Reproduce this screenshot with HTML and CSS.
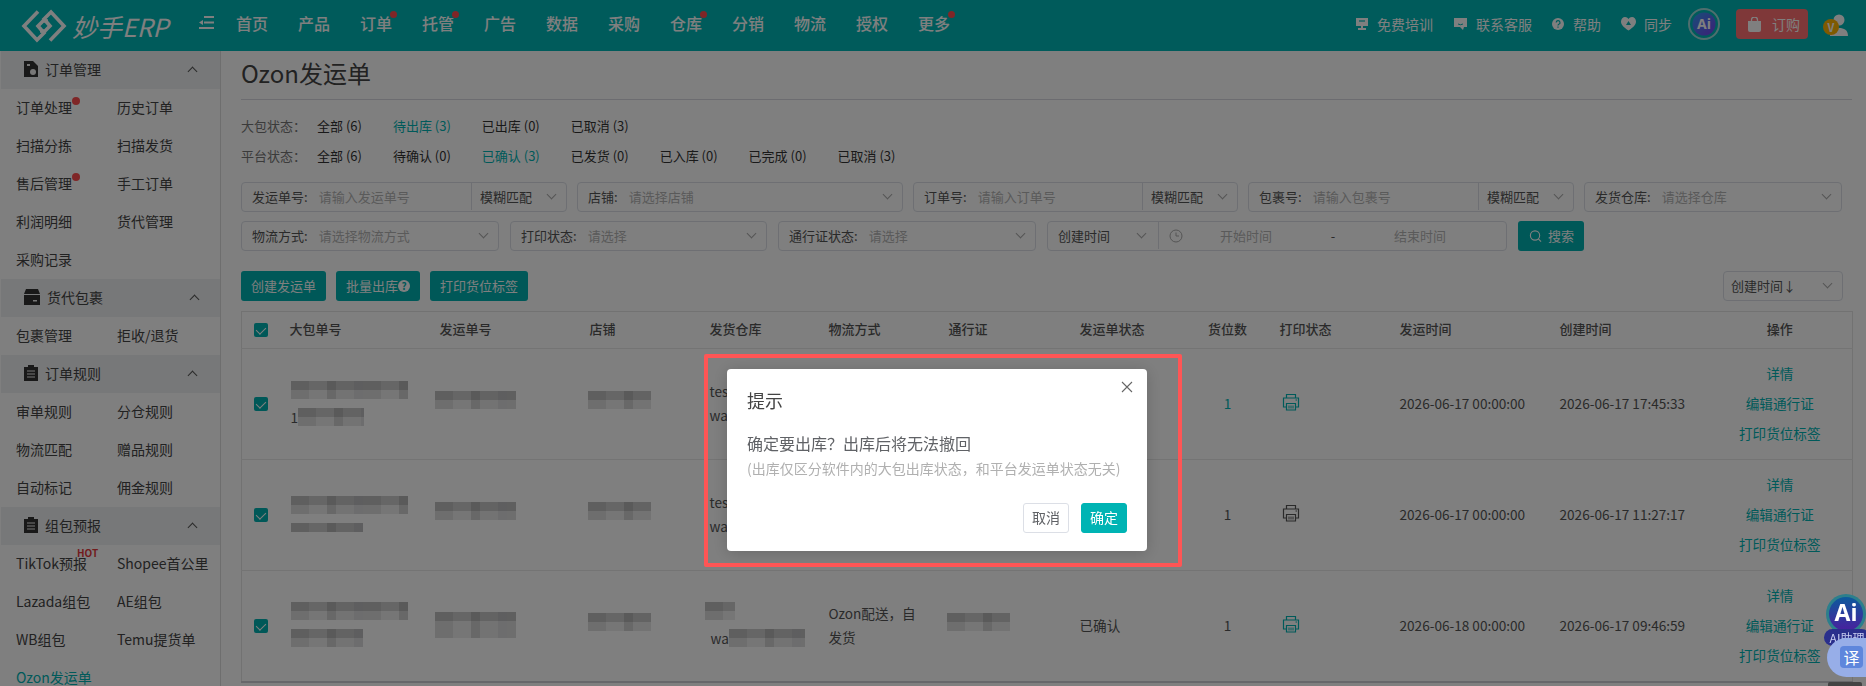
FILE: index.html
```html
<!DOCTYPE html>
<html lang="zh-CN">
<head>
<meta charset="utf-8">
<title>Ozon发运单</title>
<link rel="stylesheet" href="styles.css">
</head>
<body>
<div class="app">
  <header class="topbar">
    <div class="brand">
      <svg class="logo" viewBox="0 0 46 34" width="46" height="34"><g fill="none" stroke="#fff" stroke-width="3.6"><path d="M17 2.5 3 17l13 14 7-7-6-7 5-5h5"/><path d="M29 31.500 43 17 30 3l-7 7 6 7-5 5h-5"/></g></svg>
      <span class="brand-name">妙手ERP</span>
    </div>
    <svg class="collapse" viewBox="0 0 15 13" width="15" height="13"><path d="M5 1h10M5 6.500h10M0 12h15" stroke="#fff" stroke-width="2.200" fill="none"/><path d="M4 4v5L0 6.500z" fill="#fff"/></svg>
    <nav class="nav">
      <a class="nav-item">首页</a><a class="nav-item">产品</a><a class="nav-item dot">订单</a><a class="nav-item dot">托管</a><a class="nav-item">广告</a><a class="nav-item">数据</a><a class="nav-item">采购</a><a class="nav-item dot">仓库</a><a class="nav-item">分销</a><a class="nav-item">物流</a><a class="nav-item">授权</a><a class="nav-item dot">更多</a>
    </nav>
    <div class="tools">
      <span class="tool"><svg viewBox="0 0 14 14" width="14" height="14"><path d="M1 1h12v8H8v2h3v2H3v-2h3V9H1z" fill="#fff"/><path d="M4 4h6" stroke="#00b7b7" stroke-width="1.200"/></svg>免费培训</span>
      <span class="tool"><svg viewBox="0 0 15 14" width="15" height="14"><path d="M1 1h13v9h-3l-1 3-3-3H1z" fill="#fff"/><path d="M5 7q2.500 1.500 5 0" stroke="#00b7b7" fill="none"/></svg>联系客服</span>
      <span class="tool tool-help"><svg viewBox="0 0 12 12" width="12" height="12"><circle cx="6" cy="6" r="6" fill="#fff"/><path d="M4.200 4.600a1.900 1.900 0 1 1 2.600 1.700c-.6.300-.8.600-.8 1.200M6 8.600v1.200" fill="none" stroke="#00b7b7" stroke-width="1.200"/></svg>帮助</span>
      <span class="tool tool-sync"><svg viewBox="0 0 15 14" width="15" height="14"><path d="M7.500 13.500C3 10.500 0 8 0 4.500 0 2 2 0 4 0c1.500 0 2.700.7 3.500 2C8.300.7 9.500 0 11 0c2 0 4 2 4 4.500 0 3.500-3 6-7.500 9z" fill="#fff"/><path d="M7.500 4 5 8h5z" fill="#00b7b7"/></svg>同步</span>
      <svg class="ai-top" viewBox="0 0 32 32" width="32" height="32"><defs><linearGradient id="aig" x1="0" y1="0" x2="1" y2="1"><stop offset="0" stop-color="#2f9bf0"/><stop offset="1" stop-color="#7a3ff0"/></linearGradient></defs><circle cx="16" cy="16" r="15" fill="none" stroke="#9fdcdc" stroke-width="2"/><circle cx="16" cy="16" r="11.500" fill="url(#aig)"/><text x="16" y="21" class="ai-mark">Ai</text></svg>
      <a class="buy"><svg viewBox="0 0 13 15" width="13" height="15"><path d="M0 4h13v9a2 2 0 0 1-2 2H2a2 2 0 0 1-2-2z" fill="#fff"/><path d="M3.500 6V3a3 3 0 0 1 6 0v3" fill="none" stroke="#fff" stroke-width="1.300"/></svg>订购</a>
      <span class="user">
        <svg viewBox="0 0 22 22" width="22" height="22"><circle cx="11" cy="6" r="5.500" fill="#fff"/><path d="M2 22c0-6 4-8 9-8s9 2 9 8z" fill="#fff"/></svg>
        <i class="vip">V</i>
      </span>
    </div>
  </header>

  <div class="body">
    <aside class="side">
      <section>
        <h3 class="side-head"><svg viewBox="0 0 14 16" width="14" height="16"><path d="M0 0h9l5 5v11H0z" fill="#333"/><circle cx="9" cy="11" r="3" fill="#eee"/><path d="M3 3h3v2H3z" fill="#eee"/></svg><span>订单管理</span><i class="chev"></i></h3>
        <div class="side-grid">
          <a class="side-link dotted">订单处理</a><a class="side-link">历史订单</a>
          <a class="side-link">扫描分拣</a><a class="side-link">扫描发货</a>
          <a class="side-link dotted">售后管理</a><a class="side-link">手工订单</a>
          <a class="side-link">利润明细</a><a class="side-link">货代管理</a>
          <a class="side-link">采购记录</a>
        </div>
      </section>
      <section>
        <h3 class="side-head"><svg viewBox="0 0 16 16" width="16" height="16"><path d="M2 0h12l2 5H0z" fill="#333"/><path d="M0 6h16v10H0z" fill="#333"/><path d="M9 11h4v1.500H9z" fill="#eee"/></svg><span>货代包裹</span><i class="chev"></i></h3>
        <div class="side-grid">
          <a class="side-link">包裹管理</a><a class="side-link">拒收/退货</a>
        </div>
      </section>
      <section>
        <h3 class="side-head"><svg viewBox="0 0 14 16" width="14" height="16"><path d="M0 2h4V0h6v2h4v14H0z" fill="#333"/><path d="M3 6h8M3 9h8M3 12h8" stroke="#eee" stroke-width="1.200"/></svg><span>订单规则</span><i class="chev"></i></h3>
        <div class="side-grid">
          <a class="side-link">审单规则</a><a class="side-link">分仓规则</a>
          <a class="side-link">物流匹配</a><a class="side-link">赠品规则</a>
          <a class="side-link">自动标记</a><a class="side-link">佣金规则</a>
        </div>
      </section>
      <section>
        <h3 class="side-head"><svg viewBox="0 0 14 16" width="14" height="16"><path d="M0 2h4V0h6v2h4v14H0z" fill="#333"/><path d="M3 6h8M3 9h8M3 12h8" stroke="#eee" stroke-width="1.200"/></svg><span>组包预报</span><i class="chev"></i></h3>
        <div class="side-grid">
          <a class="side-link hot">TikTok预报<b>HOT</b></a><a class="side-link">Shopee首公里</a>
          <a class="side-link">Lazada组包</a><a class="side-link">AE组包</a>
          <a class="side-link">WB组包</a><a class="side-link">Temu提货单</a>
          <a class="side-link current">Ozon发运单</a>
        </div>
      </section>
    </aside>

    <main class="main">
      <h1 class="title">Ozon发运单</h1>

      <div class="status-block">
        <div class="status-row"><span class="status-label">大包状态：</span><a class="status">全部 (6)</a><a class="status on">待出库 (3)</a><a class="status">已出库 (0)</a><a class="status">已取消 (3)</a></div>
        <div class="status-row"><span class="status-label">平台状态：</span><a class="status">全部 (6)</a><a class="status">待确认 (0)</a><a class="status on">已确认 (3)</a><a class="status">已发货 (0)</a><a class="status">已入库 (0)</a><a class="status">已完成 (0)</a><a class="status">已取消 (3)</a></div>
      </div>

      <div class="filters">
        <div class="field w326"><span class="f-label">发运单号:</span><span class="f-ph">请输入发运单号</span><span class="f-sel"><span>模糊匹配</span><i class="down"></i></span></div>
        <div class="field w326"><span class="f-label">店铺:</span><span class="f-ph">请选择店铺</span><i class="down"></i></div>
        <div class="field w325"><span class="f-label">订单号:</span><span class="f-ph">请输入订单号</span><span class="f-sel"><span>模糊匹配</span><i class="down"></i></span></div>
        <div class="field w326"><span class="f-label">包裹号:</span><span class="f-ph">请输入包裹号</span><span class="f-sel"><span>模糊匹配</span><i class="down"></i></span></div>
        <div class="field w258"><span class="f-label">发货仓库:</span><span class="f-ph">请选择仓库</span><i class="down"></i></div>
      </div>
      <div class="filters second">
        <div class="field w258"><span class="f-label">物流方式:</span><span class="f-ph">请选择物流方式</span><i class="down"></i></div>
        <div class="field w257"><span class="f-label">打印状态:</span><span class="f-ph">请选择</span><i class="down"></i></div>
        <div class="field w258"><span class="f-label">通行证状态:</span><span class="f-ph">请选择</span><i class="down"></i></div>
        <div class="field w460">
          <span class="t-sel"><span>创建时间</span><i class="down"></i></span>
          <svg class="clock" viewBox="0 0 14 14" width="14" height="14"><circle cx="7" cy="7" r="6" fill="none" stroke="#aaa"/><path d="M7 3.500V7h3" fill="none" stroke="#aaa"/></svg>
          <span class="t-val">开始时间</span><span class="t-dash">-</span><span class="t-val">结束时间</span>
        </div>
        <a class="btn search"><svg viewBox="0 0 14 14" width="14" height="14"><circle cx="6.500" cy="6.500" r="5" fill="none" stroke="#fff" stroke-width="1.200"/><path d="m10 10 3 3" stroke="#fff" stroke-width="1.200"/></svg>搜索</a>
      </div>

      <div class="actions">
        <div class="action-btns">
          <a class="btn">创建发运单</a>
          <a class="btn">批量出库<i class="q">?</i></a>
          <a class="btn">打印货位标签</a>
        </div>
        <div class="field sort"><span class="f-label">创建时间↓</span><i class="down"></i></div>
      </div>

      <table class="grid">
        <colgroup>
          <col class="c36"><col class="c150"><col class="c150"><col class="c120"><col class="c119"><col class="c120"><col class="c131"><col class="c128"><col class="c72"><col class="c120"><col class="c160"><col class="c160"><col class="c145">
        </colgroup>
        <thead>
          <tr><th><i class="check"></i></th><th>大包单号</th><th>发运单号</th><th>店铺</th><th>发货仓库</th><th>物流方式</th><th>通行证</th><th>发运单状态</th><th class="ctr qty">货位数</th><th>打印状态</th><th>发运时间</th><th>创建时间</th><th class="ctr">操作</th></tr>
        </thead>
        <tbody>
          <tr>
            <td><i class="check"></i></td>
            <td><div class="mos m117"></div><div class="id-line"><span>1</span><div class="mos m66"></div></div></td>
            <td><div class="mos m81 inset"></div></td>
            <td><div class="mos m63 inset"></div></td>
            <td><p class="ln">test</p><p class="ln">warehouse</p></td>
            <td><p class="ln">Ozon配送，自</p><p class="ln">发货</p></td>
            <td><div class="mos m63 tiny"></div></td>
            <td>已确认</td>
            <td class="ctr qty on-text">1</td>
            <td><svg class="printer teal" viewBox="0 0 18 18" width="18" height="18"><use href="#print"/></svg></td>
            <td>2026-06-17 00:00:00</td>
            <td>2026-06-17 17:45:33</td>
            <td class="ctr ops"><a>详情</a><a>编辑通行证</a><a>打印货位标签</a></td>
          </tr>
          <tr>
            <td><i class="check"></i></td>
            <td><div class="mos m117"></div><div class="id-line"><div class="mos m72 slim"></div></div></td>
            <td><div class="mos m81 inset"></div></td>
            <td><div class="mos m63 inset"></div></td>
            <td><p class="ln">test</p><p class="ln">warehouse</p></td>
            <td><p class="ln">Ozon配送，自</p><p class="ln">发货</p></td>
            <td><div class="mos m63 tiny"></div></td>
            <td>已确认</td>
            <td class="ctr qty">1</td>
            <td><svg class="printer" viewBox="0 0 18 18" width="18" height="18"><use href="#print"/></svg></td>
            <td>2026-06-17 00:00:00</td>
            <td>2026-06-17 11:27:17</td>
            <td class="ctr ops"><a>详情</a><a>编辑通行证</a><a>打印货位标签</a></td>
          </tr>
          <tr>
            <td><i class="check"></i></td>
            <td><div class="mos m117"></div><div class="id-line"><div class="mos m72"></div></div></td>
            <td><div class="mos m81 tall"></div></td>
            <td><div class="mos m63 inset"></div></td>
            <td class="wh"><div class="mos m30"></div><div class="id-line"><span class="ln">wa</span><div class="mos m76"></div></div></td>
            <td><p class="ln">Ozon配送，自</p><p class="ln">发货</p></td>
            <td><div class="mos m63 inset"></div></td>
            <td>已确认</td>
            <td class="ctr qty">1</td>
            <td><svg class="printer teal" viewBox="0 0 18 18" width="18" height="18"><use href="#print"/></svg></td>
            <td>2026-06-18 00:00:00</td>
            <td>2026-06-17 09:46:59</td>
            <td class="ctr ops"><a>详情</a><a>编辑通行证</a><a>打印货位标签</a></td>
          </tr>
        </tbody>
      </table>
    </main>
  </div>

  <svg class="sprite" width="0" height="0"><symbol id="print" viewBox="0 0 18 18"><path d="M4.500 5V1.500h9V5M4.500 14H1.500V5h15v9h-3M4.500 10.500h9v6.500h-9z" fill="none" stroke="currentColor" stroke-width="1.200"/><path d="M13.500 7h1.500M7 12.500v3M9 12.500v3M11 12.500v3" stroke="currentColor"/></symbol></svg>
</div>

<div class="mask"></div>
<div class="scroll-thumb"></div>

<div class="dialog">
  <button class="close" aria-label="关闭"><svg viewBox="0 0 12 12" width="12" height="12"><path d="m1 1 10 10M11 1 1 11" stroke="#666" stroke-width="1.100" fill="none"/></svg></button>
  <h2 class="d-title">提示</h2>
  <p class="d-msg">确定要出库？出库后将无法撤回</p>
  <p class="d-sub">(出库仅区分软件内的大包出库状态，和平台发运单状态无关)</p>
  <div class="d-foot"><a class="d-btn">取消</a><a class="d-btn primary">确定</a></div>
</div>
<div class="red-box"></div>

<div class="float-ai">
  <svg viewBox="0 0 40 40" width="40" height="40"><defs><linearGradient id="aib" x1="0" y1="0" x2="0" y2="1"><stop offset="0" stop-color="#0c5a9c"/><stop offset="1" stop-color="#4a1f9e"/></linearGradient></defs><circle cx="20" cy="20" r="20" fill="#2c7f8c"/><circle cx="20" cy="20" r="17" fill="url(#aib)"/><text x="20" y="27" class="ai-mark big">Ai</text></svg>
  <span class="ai-tag">AI助理</span>
</div>
<div class="float-tr"><span>译</span></div>
</body>
</html>
```

FILE: styles.css
```css
* { box-sizing: border-box; }
html, body { margin: 0; height: 100%; }
body {
  font-family: "Noto Sans CJK SC", "Noto Sans", sans-serif;
  font-size: 13px;
  color: #555;
  background: #fff;
  overflow: hidden;
}
a { color: inherit; text-decoration: none; }
i { font-style: normal; }
h1, h2, h3, p { margin: 0; font-weight: 400; }
.app { height: 686px; display: flex; flex-direction: column; overflow: hidden; }
.sprite { position: absolute; }

/* top bar */
.topbar { height: 51px; flex: none; background: #00b7b7; display: flex; align-items: center; color: #fff; }
.brand { display: flex; align-items: center; margin-left: 21px; width: 178px; }
.logo { flex: none; }
.brand-name { font-size: 25px; font-style: italic; line-height: 34px; margin-left: 5px; }
.collapse { flex: none; margin-top: -6px; }
.nav { display: flex; margin-left: 22px; }
.nav-item { width: 32px; margin-right: 30px; font-size: 16px; font-weight: 500; line-height: 24px; position: relative; margin-top: -6px; }
.nav-item.dot::after { content: ""; position: absolute; right: -5px; top: 0; width: 7px; height: 7px; border-radius: 50%; background: #ff4d4f; }
.tools { margin-left: auto; display: flex; align-items: center; padding-right: 16px; margin-top: -3px; }
.tool { display: flex; align-items: center; gap: 8px; font-size: 14px; line-height: 20px; margin-right: 20px; }
.tool-help { gap: 9px; }
.tool-sync { margin-right: 16px; }
.ai-top { flex: none; margin-right: 16px; }
.ai-mark { font-family: "Open Sans", sans-serif; font-size: 14px; font-weight: 700; fill: #fff; text-anchor: middle; }
.ai-mark.big { font-size: 23px; }
.buy { width: 72px; height: 30px; background: #fe7072; border-radius: 4px; display: flex; align-items: center; gap: 11px; padding-left: 12px; font-size: 14px; margin-right: 15px; }
.user { width: 27px; height: 22px; position: relative; display: flex; justify-content: flex-end; margin-top: 2px; }
.vip { position: absolute; left: 0; top: 5px; width: 16px; height: 16px; border-radius: 50%; background: #ffb400; font-size: 11px; font-weight: 700; line-height: 16px; text-align: center; color: #fff; }

/* sidebar */
.body { flex: 1; min-height: 0; display: flex; }
.side { width: 221px; flex: none; padding-left: 1px; border-right: 1px solid #dcdcdc; }
.side-head { height: 38px; padding-bottom: 2px; background: #eef0f2; display: flex; align-items: center; padding-left: 23px; font-size: 14px; color: #444; }
.side-head svg { flex: none; margin-right: 7px; }
.side-head span { width: 144px; }
.chev { width: 7px; height: 7px; border-left: 1px solid #555; border-top: 1px solid #555; transform: rotate(45deg); margin-top: 5px; }
.side-grid { display: grid; grid-template-columns: 101px 1fr; padding-left: 15px; }
.side-link { height: 38px; line-height: 36px; font-size: 14px; color: #444; white-space: nowrap; position: relative; justify-self: start; }
.side-link.dotted::after { content: ""; position: absolute; right: -8px; top: 8px; width: 8px; height: 8px; border-radius: 50%; background: #ff4d4f; }
.side-link b { position: absolute; left: 61px; top: 2px; font-size: 10px; line-height: 12px; color: #e5393b; font-weight: 700; }
.side-link.current { color: #00b4b4; }

/* main */
.main { flex: 1; min-width: 0; padding: 0 14px 0 20px; }
.title { height: 49px; font-size: 24px; line-height: 44px; color: #444; border-bottom: 1px solid #d8d8e0; white-space: nowrap; }
.status-block { margin-top: 12px; }
.status-row { height: 30px; line-height: 28px; display: flex; font-size: 13px; color: #333; }
.status-label { width: 76px; color: #777; }
.status { margin-right: 31px; white-space: nowrap; }
.status.on { color: #00b4b4; }
.filters { display: flex; gap: 10px; margin-top: 10px; }
.filters.second { margin-top: 9px; gap: 11px; }
.field { height: 30px; padding-bottom: 1px; border: 1px solid #dcdfe6; border-radius: 4px; display: flex; align-items: center; padding-left: 10px; position: relative; white-space: nowrap; }
.w326 { width: 326px; } .w325 { width: 325px; } .w258 { width: 258px; } .w257 { width: 257px; } .w460 { width: 460px; padding-left: 0; }
.f-label { color: #555; margin-right: 11px; }
.f-ph { color: #b4b4b4; flex: 1; }
.down { flex: none; width: 7px; height: 7px; border-right: 1px solid #aaa; border-bottom: 1px solid #aaa; transform: rotate(45deg); margin: -4px 11px 0 0; }
.f-sel { width: 95px; height: 100%; flex: none; border-left: 1px solid #dcdfe6; display: flex; align-items: center; justify-content: space-between; padding-left: 8px; color: #555; }
.t-sel { width: 111px; height: 100%; flex: none; border-right: 1px solid #dcdfe6; display: flex; align-items: center; justify-content: space-between; padding-left: 10px; color: #555; }
.t-sel .down { margin-right: 13px; }
.clock { flex: none; margin: 0 2px 0 10px; }
.t-val { width: 122px; text-align: center; color: #b4b4b4; }
.t-dash { width: 52px; text-align: center; color: #555; }
.btn { height: 30px; padding: 0 10px 1px; background: #00b0b0; border-radius: 3px; color: #fff; font-size: 13px; display: flex; align-items: center; white-space: nowrap; }
.search { width: 66px; gap: 6px; padding-left: 11px; }
.q { width: 12px; height: 12px; border-radius: 50%; background: #fff; color: #00b0b0; font-size: 10px; line-height: 12px; font-weight: 700; text-align: center; }
.actions { display: flex; justify-content: space-between; margin-top: 20px; }
.action-btns { display: flex; gap: 10px; }
.sort { width: 120px; margin-right: 9px; padding-left: 7px; justify-content: space-between; }

/* table */
.grid { width: 1611px; margin-top: 10px; table-layout: fixed; border-collapse: collapse; border: 1px solid #e4e4e4; border-bottom: 2px solid #cfcfd4; }
.c36 { width: 36px; } .c150 { width: 150px; } .c120 { width: 120px; } .c119 { width: 119px; } .c131 { width: 131px; } .c128 { width: 128px; } .c72 { width: 72px; } .c160 { width: 160px; } .c145 { width: 145px; }
.grid th { height: 37px; padding: 0 0 3px 12px; text-align: left; font-weight: 500; font-size: 13px; color: #555; border-bottom: 1px solid #e8e8e8; }
.grid td { height: 111px; padding: 0 0 2px 12px; font-size: 13.600px; color: #555; border-bottom: 1px solid #e8e8e8; vertical-align: middle; }
.grid th:first-child, .grid td:first-child { padding-bottom: 0; }
.grid th.ctr, .grid td.ctr { text-align: center; padding-left: 0; }
.grid th.qty, .grid td.qty { padding-right: 8px; }
.on-text { color: #00b4b4 !important; }
.check { display: block; width: 14px; height: 14px; border-radius: 2px; background: #00b0b0; position: relative; }
.check::after { content: ""; position: absolute; left: 4px; top: 2px; width: 5px; height: 8px; border-right: 1.200px solid #fff; border-bottom: 1.200px solid #fff; transform: rotate(45deg); }
.ln { line-height: 24px; }
.printer { display: block; margin: -2px 0 0 2px; color: #555; }
.printer.teal { color: #00b4b4; }
.ops a { display: block; line-height: 30px; color: #00b4b4; }
.mos {
  height: 18px;
  background-color: #e4e4e4;
  background-image:
    repeating-linear-gradient(90deg, rgba(0,0,0,.07) 0 18px, rgba(0,0,0,0) 18px 36px, rgba(0,0,0,.12) 36px 45px, rgba(0,0,0,.03) 45px 63px, rgba(0,0,30,.08) 63px 72px),
    linear-gradient(180deg, rgba(0,0,0,.1) 0 9px, rgba(255,255,255,.35) 9px 18px);
}
.m117 { width: 117px; margin-left: 1px; }
.m81 { width: 81px; }
.m72 { width: 72px; margin-left: 1px; }
.m66 { width: 66px; }
.m63 { width: 63px; }
.m30 { width: 30px; margin-left: -5px; }
.m76 { width: 76px; }
.inset { margin-left: -3px; margin-top: -6px; }
.tiny { margin-left: 4px; }
.tall { height: 26px; margin-left: -5px; }
.slim { height: 9px; }
.m81.inset, .m81.tall { margin-left: -5px; }
.m63.inset { margin-left: -2px; }
.id-line { display: flex; align-items: center; margin-top: 9px; }
.id-line > span { line-height: 18px; margin-left: 1px; }
.wh .id-line { margin-top: 9px; }

/* overlay */
.mask { position: fixed; inset: 0; background: rgba(0,0,0,.5); }
.scroll-thumb { position: fixed; left: 1828px; top: 682px; width: 34px; height: 4px; border-radius: 2px 2px 0 0; background: #444; }
.dialog { position: fixed; left: 727px; top: 369px; width: 420px; height: 182px; background: #fff; border-radius: 4px; box-shadow: 0 2px 16px rgba(0,0,0,.18); padding: 19px 20px 20px; }
.close { position: absolute; right: 14px; top: 12px; width: 12px; height: 12px; padding: 0; border: 0; background: none; display: block; }
.close svg { display: block; }
.d-title { font-size: 18px; line-height: 24px; color: #444; }
.d-msg { margin-top: 19px; font-size: 16px; line-height: 24px; color: #606266; }
.d-sub { margin-top: 2px; font-size: 14px; line-height: 22px; color: #b0b0b0; white-space: nowrap; }
.d-foot { display: flex; justify-content: flex-end; gap: 12px; margin-top: 24px; }
.d-btn { width: 46px; height: 30px; border: 1px solid #dcdfe6; border-radius: 3px; font-size: 14px; line-height: 27px; text-align: center; color: #606266; background: #fff; }
.d-btn.primary { background: #00b4b4; border-color: #00b4b4; color: #fff; }
.red-box { position: fixed; left: 704px; top: 354px; width: 478px; height: 213px; border: 4px solid #f55; border-radius: 2px; }
.float-ai { position: fixed; left: 1826px; top: 594px; width: 40px; }
.float-ai svg { display: block; }
.ai-tag { position: absolute; left: -2px; top: 35px; width: 46px; height: 17px; border-radius: 9px; background: #2a2f8c; color: #c8cdf0; font-size: 12px; line-height: 17px; text-align: center; white-space: nowrap; }
.float-tr { position: fixed; left: 1827px; top: 638px; width: 39px; height: 39px; border-radius: 20px 0 0 20px; background: #97aee8; padding: 8px 0 0 13px; }
.float-tr span { display: block; width: 23px; height: 22px; border-radius: 4px; background: #5e86dc; color: #fff; font-size: 16px; line-height: 22px; text-align: center; }
```
